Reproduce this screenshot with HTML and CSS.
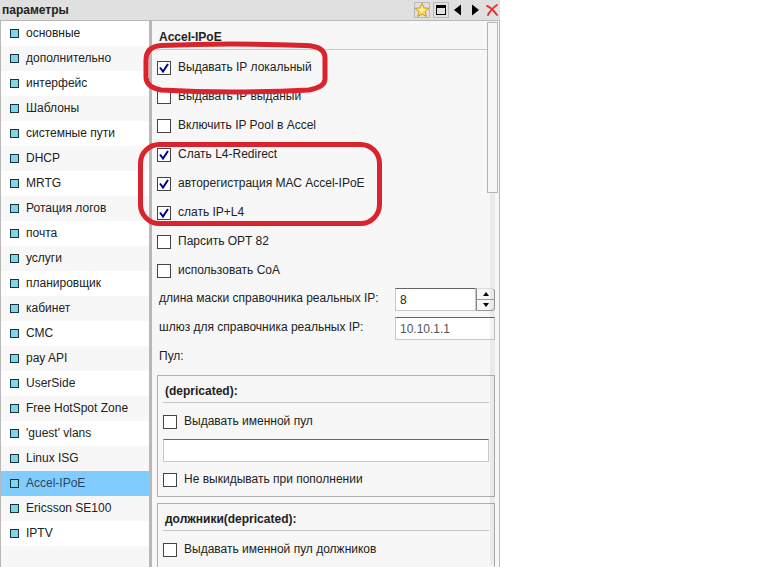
FILE: index.html
```html
<!DOCTYPE html>
<html lang="ru">
<head>
<meta charset="utf-8">
<title>параметры</title>
<link rel="stylesheet" href="styles.css">
</head>
<body>
<div class="page">
<main class="window">
  <header class="titlebar">
    <h1>параметры</h1>
    <div class="tools">
      <button class="tool framed" type="button" aria-label="Избранное"><svg width="16" height="16" viewBox="0 0 16 16"><path d="M8 1.3 10 5.8l5 .5-3.7 3.3 1 4.9L8 12.1l-4.3 2.4 1-4.9L1 6.3l5-.5z" fill="#ffd95a" stroke="#c99a2c" stroke-linejoin="round"/><path d="M8 3.5 9.2 7l3 .2-3 1.6L8 10.5 6 9 4 7.2 7 7z" fill="#fff3a8"/></svg></button>
      <button class="tool framed" type="button" aria-label="Развернуть"><svg width="16" height="16" viewBox="0 0 16 16"><path d="M3 3h10v10H3zM4 6v6h8V6z" fill="#000" fill-rule="evenodd"/></svg></button>
      <button class="tool" type="button" aria-label="Назад"><svg width="16" height="16" viewBox="0 0 16 16"><path d="M11 2.500v11L4 8z"/></svg></button>
      <button class="tool" type="button" aria-label="Вперёд"><svg width="16" height="16" viewBox="0 0 16 16"><path d="M5 2.500v11L12 8z"/></svg></button>
      <button class="tool" type="button" aria-label="Закрыть"><svg width="16" height="16" viewBox="0 0 16 16" fill="none" stroke="#e23a28" stroke-linecap="round"><path d="M3 4Q7 5 13 13" stroke-width="2"/><path d="M13 3Q7 7 4 13" stroke-width="2"/></svg></button>
    </div>
  </header>
  <div class="panes">
    <nav class="sidebar">
      <a href="#">основные</a>
      <a href="#">дополнительно</a>
      <a href="#">интерфейс</a>
      <a href="#">Шаблоны</a>
      <a href="#">системные пути</a>
      <a href="#">DHCP</a>
      <a href="#">MRTG</a>
      <a href="#">Ротация логов</a>
      <a href="#">почта</a>
      <a href="#">услуги</a>
      <a href="#">планировщик</a>
      <a href="#">кабинет</a>
      <a href="#">СМС</a>
      <a href="#">pay API</a>
      <a href="#">UserSide</a>
      <a href="#">Free HotSpot Zone</a>
      <a href="#">'guest' vlans</a>
      <a href="#">Linux ISG</a>
      <a href="#" class="selected" aria-current="page">Accel-IPoE</a>
      <a href="#">Ericsson SE100</a>
      <a href="#">IPTV</a>
    </nav>
    <form class="content">
      <h2 class="title">Accel-IPoE</h2>
      <div class="checks main">
        <label class="check"><input type="checkbox" checked>Выдавать IP локальный</label>
        <label class="check"><input type="checkbox">Выдавать IP выданый</label>
        <label class="check"><input type="checkbox">Включить IP Pool в Accel</label>
        <label class="check"><input type="checkbox" checked>Слать L4-Redirect</label>
        <label class="check"><input type="checkbox" checked>авторегистрация МАС Accel-IPoE</label>
        <label class="check"><input type="checkbox" checked>слать IP+L4</label>
        <label class="check"><input type="checkbox">Парсить OPT 82</label>
        <label class="check"><input type="checkbox">использовать CoA</label>
      </div>
      <div class="field">
        <label for="mask">длина маски справочника реальных IP:</label>
        <div class="control">
          <input class="text" id="mask" type="text" value="8">
          <div class="spin">
            <button type="button" aria-label="Больше"><svg width="8" height="4" viewBox="0 0 8 4"><path d="M4 0 7 4H1z"/></svg></button>
            <button type="button" aria-label="Меньше"><svg width="8" height="4" viewBox="0 0 8 4"><path d="M1 0h6L4 4z"/></svg></button>
          </div>
        </div>
      </div>
      <div class="field">
        <label for="gateway">шлюз для справочника реальных IP:</label>
        <div class="control"><input class="text muted" id="gateway" type="text" value="10.10.1.1"></div>
      </div>
      <p class="pool">Пул:</p>
      <section class="group">
        <h2 class="title">(depricated):</h2>
        <div class="checks">
          <label class="check"><input type="checkbox">Выдавать именной пул</label>
          <div class="row"><input class="text" type="text" aria-label="Именной пул"></div>
          <label class="check"><input type="checkbox">Не выкидывать при пополнении</label>
        </div>
      </section>
      <section class="group">
        <h2 class="title">должники(depricated):</h2>
        <div class="checks">
          <label class="check"><input type="checkbox">Выдавать именной пул должников</label>
          <div class="row"><input class="text" type="text" aria-label="Пул должников"></div>
        </div>
      </section>
      <div class="track"></div>
      <div class="thumb"></div>
    </form>
  </div>
  <svg class="marks" width="260" height="190" viewBox="0 0 260 190" fill="none" stroke="#d9232d" stroke-width="5" aria-hidden="true">
    <path d="M25.500 5.500Q95 2.500 170 5.500Q190 6 190 18V39Q190 47 174 50Q95 54 26 50Q11 47 11 37V20Q11 7 25.500 5.500Z"/>
    <rect x="5.500" y="104.500" width="239" height="79" rx="19"/>
  </svg>
</main>
</div>
</body>
</html>
```
FILE: styles.css
```css
* { box-sizing: border-box; }

body {
  margin: 0;
  background: #fff;
  color: #222;
  font: 12px/16px "Liberation Sans", Arial, sans-serif;
}

h1, h2, p { margin: 0; font-size: 12px; }

button {
  padding: 0;
  border: 0;
  background: none;
}

svg { display: block; }

.page {
  display: grid;
  grid-template-columns: minmax(0, 500fr) 268fr;
  height: 100vh;
}

.window {
  position: relative;
  display: flex;
  flex-direction: column;
  min-height: 0;
  overflow: hidden;
}

.titlebar {
  display: flex;
  align-items: center;
  justify-content: space-between;
  height: 20px;
  padding-left: 2px;
  background: #e0e0e0;
}

.tools { display: flex; gap: 1px; }

.tool {
  width: 16px;
  height: 16px;
}

.framed { outline: 1px solid #b8b8b8; outline-offset: -1px; }

.framed + .framed { margin-left: 2px; }

.panes {
  flex: 1;
  display: flex;
  min-height: 0;
  border: solid #b8b8b8;
  border-width: 1px 1px 0;
}

.sidebar {
  flex: none;
  width: 151px;
  background: #f7f7f7;
  border-right: 3px solid #b8b8b8;
}

.sidebar a {
  display: flex;
  align-items: center;
  gap: 9px;
  height: 25px;
  padding: 0 0 2px 9px;
  color: #222;
  text-decoration: none;
  white-space: nowrap;
}

.sidebar a:nth-child(odd) { background: #fff; }

.sidebar a::before {
  content: "";
  width: 7px;
  height: 7px;
  margin: 2px -2px 0 0;
  border: 1px solid #17333b;
  background: #7fd6ea;
}

.sidebar a.selected { background: #80ccff; color: #2b465c; }

.content {
  position: relative;
  flex: 1;
  min-width: 0;
  padding: 0 4px 0 5px;
  overflow: hidden;
  background: #f7f7f7;
}

.title {
  height: 29px;
  padding: 8px 0 0 2px;
  border-bottom: 1px solid #c4c8c8;
}

.check, .row {
  display: flex;
  align-items: center;
  height: 29px;
}

.row { padding-top: 2px; }

.checks { padding-top: 3px; }

.checks.main { padding: 2px 0 1px; }

.check { gap: 7px; }

.check input {
  appearance: none;
  width: 14px;
  height: 14px;
  margin: 2px 0 0;
  border: 1px solid #444;
  background: #fff;
}

.check input:checked {
  background: #fff url("data:image/svg+xml,%3Csvg xmlns='http://www.w3.org/2000/svg' viewBox='0 0 12 12'%3E%3Cpath d='M2 5.500 5 9.500 10 2' fill='none' stroke='%2300008b' stroke-width='2'/%3E%3C/svg%3E");
}

.field {
  display: flex;
  align-items: center;
  justify-content: space-between;
  height: 29px;
  padding-left: 2px;
}

.field label { padding-bottom: 3px; }

.control { display: flex; width: 100px; }

.text {
  flex: 1;
  min-width: 0;
  height: 23px;
  padding: 0 4px;
  border: 1px solid #c8c8c8;
  border-top-color: #666;
  background: #fff;
  color: #222;
  font: inherit;
}

.muted { color: #555; }

.spin {
  display: flex;
  flex-direction: column;
  width: 19px;
  border: 1px solid #999;
  border-top-color: #ddd;
  border-left-color: #888;
  border-radius: 0 4px 4px 0;
}

.spin button {
  flex: 1;
  display: grid;
  place-items: center;
}

.spin button + button { border-top: 1px solid #999; }

.pool { height: 32px; padding: 5px 0 0 2px; font-weight: normal; }

.group {
  margin-bottom: 6px;
  padding: 0 5px 3px;
  border: 1px solid #b0b0b0;
}

.group .title { height: 27px; padding-top: 7px; }

.track {
  position: absolute;
  top: 0;
  right: 4px;
  bottom: 2px;
  width: 5px;
  background: rgb(0 0 0 / 5%);
  pointer-events: none;
}

.thumb {
  position: absolute;
  top: 1px;
  right: 1px;
  width: 11px;
  height: 171px;
  border: 1px solid #b4b4b4;
  background: #f7f7f7;
}

.marks {
  position: absolute;
  top: 40px;
  left: 135px;
  pointer-events: none;
}
```
